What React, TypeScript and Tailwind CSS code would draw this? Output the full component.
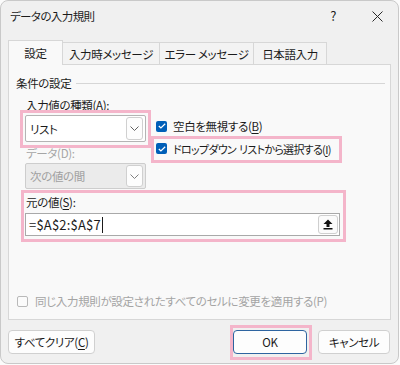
import React from "react";

const font = "font-['Noto_Sans_CJK_JP','Noto_Sans_CJK_SC',sans-serif] [font-feature-settings:'palt']";

function Chevron({ color = "#606060" }: { color?: string }) {
  return (
    <svg width="9" height="5" viewBox="0 0 9 5" fill="none">
      <path d="M0.5 0.5 L4.5 4.5 L8.5 0.5" stroke={color} strokeWidth="1" />
    </svg>
  );
}

function CheckedBox() {
  return (
    <div className="w-[11px] h-[11px] rounded-[2px] bg-[#005fb8] flex items-center justify-center shrink-0">
      <svg width="8" height="6" viewBox="0 0 8 6" fill="none">
        <path d="M0.8 3 L2.9 5 L7.2 0.8" stroke="#ffffff" strokeWidth="1.2" />
      </svg>
    </div>
  );
}

function U({ children }: { children: React.ReactNode }) {
  return <span className="underline underline-offset-[2px] decoration-[1px]">{children}</span>;
}

export default function App() {
  return (
    <div className={`w-[400px] h-[365px] bg-[#fbfbfb] ${font} text-[11.5px] tracking-[-0.35px] text-[#1b1b1b]`}>
      <div className="relative w-[399px] h-[364px] rounded-[8px] border border-[#c9c9c9] bg-[#f0f0f0] flex flex-col overflow-hidden">
        {/* Title bar */}
        <div className="h-[30px] flex items-center pl-[9px] shrink-0">
          <span className="leading-[16px] tracking-[-0.6px]">データの入力規則</span>
          <span className="ml-auto mr-[36px] text-[13px] leading-[16px]">?</span>
          <svg className="mr-[15px]" width="11" height="11" viewBox="0 0 11 11" fill="none">
            <path d="M0.5 0.5 L10.5 10.5 M10.5 0.5 L0.5 10.5" stroke="#2a2a2a" strokeWidth="1" />
          </svg>
        </div>

        {/* Tabs */}
        <div className="flex items-end pl-[7px] pt-[8px] h-[33px] shrink-0 relative z-10">
          <div className="w-[55px] h-[25px] bg-[#f9f9f9] border border-b-0 border-[#d7d7d7] flex items-center justify-center mb-[-1px]">
            <span className="leading-[16px]">設定</span>
          </div>
          <div className="w-[97px] h-[22px] bg-[#f3f3f3] border border-l-0 border-b-0 border-[#d7d7d7] flex items-center justify-center">
            <span className="leading-[16px]">入力時メッセージ</span>
          </div>
          <div className="w-[94px] h-[22px] bg-[#f3f3f3] border border-l-0 border-b-0 border-[#d7d7d7] flex items-center justify-center">
            <span className="leading-[16px]">エラー メッセージ</span>
          </div>
          <div className="w-[73px] h-[22px] bg-[#f3f3f3] border border-l-0 border-b-0 border-[#d7d7d7] flex items-center justify-center">
            <span className="leading-[16px]">日本語入力</span>
          </div>
        </div>

        {/* Panel */}
        <div className="ml-[7px] w-[383px] h-[256px] bg-[#f9f9f9] border border-[#d7d7d7] flex flex-col pl-[7px] pt-[10px] shrink-0">
          <div className="flex items-center h-[16px] gap-[5px] pr-[5px]">
            <span className="leading-[16px]">条件の設定</span>
            <div className="flex-1 h-px bg-[#d6d6d6]" />
          </div>

          <div className="flex pl-[9px] mt-[6px] gap-[10px]">
            <div className="flex flex-col w-[121px]">
              <span className="pl-[1px] leading-[16px] h-[16px]">入力値の種類(A):</span>
              <div className="mt-[2px] h-[27px] bg-white border border-[#b4b4b4] rounded-[2px] flex items-center pl-[4px] pr-[2px]">
                <span className="leading-[16px]">リスト</span>
                <div className="ml-auto w-[17px] h-[23px] border border-[#d0d0d0] rounded-[3px] bg-[#fdfdfd] flex items-center justify-center">
                  <Chevron />
                </div>
              </div>
              <span className="pl-[1px] mt-[3px] leading-[16px] h-[16px] text-[#a6a6a6]">データ(D):</span>
              <div className="mt-[2px] h-[26px] bg-[#ebebeb] border border-[#cdcdcd] rounded-[2px] flex items-center pl-[4px] pr-[2px]">
                <span className="leading-[16px] text-[#a0a0a0]">次の値の間</span>
                <div className="ml-auto w-[17px] h-[22px] border border-[#d0d0d0] rounded-[3px] bg-[#fdfdfd] flex items-center justify-center">
                  <Chevron color="#808080" />
                </div>
              </div>
            </div>
            <div className="flex flex-col pt-[18px]">
              <div className="h-[22px] flex items-center gap-[6px]">
                <CheckedBox />
                <span className="leading-[16px]">空白を無視する(<U>B</U>)</span>
              </div>
              <div className="h-[23px] flex items-center gap-[6px]">
                <CheckedBox />
                <span className="leading-[16px] text-[11px] tracking-[-0.7px]">ドロップダウン<span className="inline-block w-[3px]"> </span>リストから選択する(<U>I</U>)</span>
              </div>
            </div>
          </div>

          <div className="flex flex-col pl-[9px] mt-[5px]">
            <span className="pl-[1px] leading-[16px] h-[16px]">元の値(<U>S</U>):</span>
            <div className="mt-[3px] w-[315px] h-[23px] bg-white border border-[#a9a9a9] flex items-center pl-[3px] pr-[1px]">
              <span className="leading-[16px] text-[13px] tracking-[0.2px]">=$A$2:$A$7</span>
              <div className="w-px h-[16px] bg-[#1b1b1b] ml-[1px]" />
              <div className="ml-auto w-[20px] h-[19px] border border-[#cfcfcf] rounded-[3px] bg-[#fbfbfb] flex items-center justify-center">
                <svg width="10" height="11" viewBox="0 0 10 11" fill="none">
                  <path d="M5 0.5 L9.5 5 L6.5 5 L6.5 8 L3.5 8 L3.5 5 L0.5 5 Z" fill="#111" />
                  <rect x="0.5" y="9" width="9" height="1.5" fill="#111" />
                </svg>
              </div>
            </div>
          </div>

          <div className="mt-auto mb-[10px] flex items-center gap-[7px] pl-[1px] text-[#a4a4a4]">
            <div className="w-[11px] h-[11px] rounded-[2px] border border-[#b9b9b9] bg-[#fbfbfb]" />
            <span className="leading-[16px]">同じ入力規則が設定されたすべてのセルに変更を適用する(P)</span>
          </div>
        </div>

        {/* Buttons */}
        <div className="flex items-center mt-[10px] pl-[7px] pr-[8px] h-[24px] shrink-0">
          <div className="w-[87px] h-[24px] border border-[#d0d0d0] rounded-[4px] bg-[#fdfdfd] flex items-center justify-center">
            <span className="leading-[16px]">すべてクリア(<U>C</U>)</span>
          </div>
          <div className="ml-auto w-[74px] h-[24px] border border-[#2e64a0] rounded-[4px] bg-[#fdfdfd] flex items-center justify-center">
            <span className="leading-[16px]">OK</span>
          </div>
          <div className="ml-[11px] w-[72px] h-[24px] border border-[#d0d0d0] rounded-[4px] bg-[#fdfdfd] flex items-center justify-center">
            <span className="leading-[16px]">キャンセル</span>
          </div>
        </div>

        {/* Pink annotation boxes */}
        <div className="absolute left-[19px] top-[109px] w-[131px] h-[38px] border-[3px] border-[#f4b5ca] pointer-events-none" />
        <div className="absolute left-[150px] top-[135px] w-[191px] h-[27px] border-[3px] border-[#f4b5ca] pointer-events-none" />
        <div className="absolute left-[20px] top-[189px] w-[325px] h-[52px] border-[3px] border-[#f4b5ca] pointer-events-none" />
        <div className="absolute left-[229px] top-[324px] w-[82px] h-[35px] border-[3px] border-[#f4b5ca] pointer-events-none" />
      </div>
    </div>
  );
}
